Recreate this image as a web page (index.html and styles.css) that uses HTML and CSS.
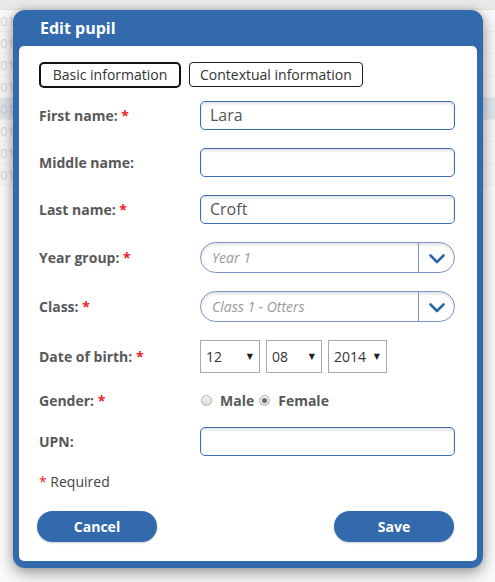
FILE: index.html
```html
<!DOCTYPE html>
<html>
<head>
<meta charset="utf-8">
<link rel="stylesheet" href="styles.css">
</head>
<body>
<div class="page">
  <div class="topbar"></div>
  <div class="row"><span>014</span></div>
  <div class="row"><span>014</span></div>
  <div class="row"><span>014</span></div>
  <div class="row"><span>014</span></div>
  <div class="row hl"><span>014</span></div>
  <div class="row"><span>014</span></div>
  <div class="row"><span>014</span></div>
  <div class="row"><span>014</span></div>
</div>

<div class="modal">
  <div class="modal-title">Edit pupil</div>
  <div class="panel">
    <div class="tabs">
      <button class="tab active">Basic information</button>
      <button class="tab">Contextual information</button>
    </div>

    <div class="field">
      <label class="lbl">First name: <span class="req">*</span></label>
      <div class="input">Lara</div>
    </div>
    <div class="field">
      <label class="lbl">Middle name:</label>
      <div class="input"></div>
    </div>
    <div class="field">
      <label class="lbl">Last name: <span class="req">*</span></label>
      <div class="input">Croft</div>
    </div>
    <div class="field">
      <label class="lbl">Year group: <span class="req">*</span></label>
      <div class="select">
        <span class="select-val">Year 1</span>
        <span class="select-btn"><svg width="16" height="10" viewBox="0 0 16 10"><path d="M1.5 1.5 L8 8 L14.5 1.5" fill="none" stroke="#2f66a8" stroke-width="2.6" stroke-linecap="round" stroke-linejoin="round"/></svg></span>
      </div>
    </div>
    <div class="field">
      <label class="lbl">Class: <span class="req">*</span></label>
      <div class="select">
        <span class="select-val">Class 1 - Otters</span>
        <span class="select-btn"><svg width="16" height="10" viewBox="0 0 16 10"><path d="M1.5 1.5 L8 8 L14.5 1.5" fill="none" stroke="#2f66a8" stroke-width="2.6" stroke-linecap="round" stroke-linejoin="round"/></svg></span>
      </div>
    </div>
    <div class="field date-field">
      <label class="lbl">Date of birth: <span class="req">*</span></label>
      <div class="dates">
        <div class="dsel w60"><span>12</span><span class="arr">&#9660;</span></div>
        <div class="dsel w56"><span>08</span><span class="arr">&#9660;</span></div>
        <div class="dsel w59"><span>2014</span><span class="arr">&#9660;</span></div>
      </div>
    </div>
    <div class="field gender-field">
      <label class="lbl">Gender: <span class="req">*</span></label>
      <div class="radios">
        <span class="radio"></span><span class="rlbl">Male</span>
        <span class="radio checked"></span><span class="rlbl">Female</span>
      </div>
    </div>
    <div class="field">
      <label class="lbl">UPN:</label>
      <div class="input"></div>
    </div>

    <div class="required"><span class="req">*</span> Required</div>

    <div class="actions">
      <button class="btn">Cancel</button>
      <button class="btn">Save</button>
    </div>
  </div>
</div>
</body>
</html>
```

FILE: styles.css
```css
html, body {
  margin: 0;
  padding: 0;
  background: #ffffff;
  font-family: "Open Sans", "Liberation Sans", sans-serif;
}

.page {
  width: 495px;
  height: 582px;
  overflow: hidden;
  background: #fbfbfb;
}

.topbar {
  height: 9px;
  background: #e9e9e9;
  border-bottom: 1px solid #e2e2e2;
}

.row {
  height: 21px;
  border-bottom: 1px solid #efefef;
  font-size: 13px;
  line-height: 22px;
  color: #d6d6d6;
  background: #f7f7f7;
}

.row span {
  display: inline-block;
}

.row.hl {
  background: #e1e6ed;
  color: #c6cdd6;
}

.modal {
  position: absolute;
  left: 13px;
  top: 10px;
  width: 458px;
  padding: 0 6px 7px 6px;
  background: #326aad;
  border-radius: 12px;
  box-shadow: 0 6px 16px rgba(0, 0, 0, 0.35), 0 0 8px rgba(0, 0, 0, 0.15);
}

.modal-title {
  height: 36px;
  line-height: 37px;
  padding-left: 21px;
  color: #ffffff;
  font-weight: 700;
  font-size: 16px;
}

.panel {
  background: #ffffff;
  border-radius: 5px;
  padding: 16px 20px 19px 20px;
}

.tabs {
  display: flex;
  gap: 8px;
  margin-bottom: 13px;
}

.tab {
  font-family: "Open Sans", "Liberation Sans", sans-serif;
  font-size: 14px;
  color: #333333;
  background: #ffffff;
  border: 1px solid #222222;
  border-radius: 4px;
  height: 25px;
  padding: 0 10px;
  line-height: 22px;
  margin: 0;
}

.tab.active {
  border: 2px solid #111111;
  border-radius: 5px;
  height: 26px;
  padding: 0 10px;
  width: 142px;
}

.field {
  display: flex;
  align-items: center;
  margin-bottom: 18px;
}

.lbl {
  width: 161px;
  flex: none;
  font-size: 14px;
  font-weight: 700;
  color: #585858;
}

.req {
  color: #ee2222;
}

.input {
  box-sizing: border-box;
  width: 255px;
  height: 29px;
  border: 1px solid #3a6cb0;
  border-radius: 5px;
  box-shadow: inset 0 2px 3px rgba(0, 0, 0, 0.12);
  padding-left: 9px;
  font-size: 16px;
  line-height: 27px;
  color: #555555;
}

.select {
  box-sizing: border-box;
  width: 255px;
  height: 31px;
  border: 1px solid #7f93c8;
  border-radius: 16px;
  display: flex;
  align-items: stretch;
  box-shadow: inset 0 2px 3px rgba(0, 0, 0, 0.12);
}

.select-val {
  flex: 1;
  padding-left: 11px;
  font-size: 14px;
  font-style: italic;
  color: #9a9a9a;
  line-height: 29px;
}

.select-btn {
  width: 36px;
  border-left: 1px solid #7f93c8;
  display: flex;
  align-items: center;
  justify-content: center;
  padding-top: 2px;
  box-sizing: border-box;
}

.date-field {
  margin-bottom: 17px;
}

.dates {
  display: flex;
  gap: 6px;
}

.dsel {
  box-sizing: border-box;
  height: 33px;
  border: 1px solid #a9a9a9;
  display: flex;
  align-items: center;
  justify-content: space-between;
  padding: 0 6px 0 5px;
  font-size: 14px;
  color: #333333;
}

.w60 { width: 60px; }
.w56 { width: 56px; }
.w59 { width: 59px; }

.arr {
  font-family: "DejaVu Sans", sans-serif;
  font-size: 8px;
  color: #222222;
}

.gender-field {
  height: 20px;
  margin-bottom: 17px;
}

.radios {
  display: flex;
  align-items: center;
  font-size: 14px;
  font-weight: 700;
  color: #585858;
}

.radio {
  box-sizing: border-box;
  width: 11px;
  height: 11px;
  border: 1px solid #b0b0b0;
  border-radius: 50%;
  background: linear-gradient(#f4f4f4, #dcdcdc);
  margin-left: 1px;
  margin-right: 8px;
  position: relative;
}

.radio.checked::after {
  content: "";
  position: absolute;
  left: 2px;
  top: 2px;
  width: 5px;
  height: 5px;
  border-radius: 50%;
  background: #6a6a6a;
}

.rlbl {
  margin-right: 4px;
}

.required {
  font-size: 14px;
  color: #444444;
  line-height: 20px;
  margin-top: -2px;
}

.actions {
  display: flex;
  justify-content: space-between;
  margin-top: 19px;
  padding: 0 3px 0 0;
  margin-left: -2px;
}

.btn {
  width: 120px;
  height: 31px;
  border: none;
  border-radius: 16px;
  background: #326aad;
  color: #ffffff;
  font-family: "Open Sans", "Liberation Sans", sans-serif;
  font-size: 14px;
  font-weight: 700;
  box-shadow: 0 1px 2px rgba(0, 0, 0, 0.2);
  padding: 0;
}
```
